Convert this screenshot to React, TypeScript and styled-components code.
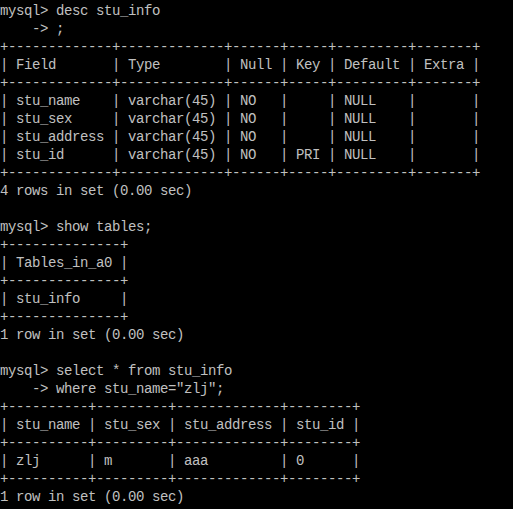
import React from "react";
import styled, { createGlobalStyle } from "styled-components";

const Global = createGlobalStyle`
  html, body { margin: 0; padding: 0; background: #000; }
  #root { background: #000; }
`;

const Terminal = styled.div`
  box-sizing: border-box;
  background: #000;
  width: 513px;
  height: 509px;
  padding-top: 2px;
  overflow: hidden;
  color: #c0c0c0;
  font-family: "Liberation Mono", "DejaVu Sans Mono", monospace;
  font-size: 14px;
  letter-spacing: -0.4px;
  line-height: 18px;
  display: flex;
  flex-direction: column;
`;

const Line = styled.div`
  white-space: pre;
  height: 18px;
  flex: none;
`;

const lines: string[] = [
  "mysql> desc stu_info",
  "    -> ;",
  "+-------------+-------------+------+-----+---------+-------+",
  "| Field       | Type        | Null | Key | Default | Extra |",
  "+-------------+-------------+------+-----+---------+-------+",
  "| stu_name    | varchar(45) | NO   |     | NULL    |       |",
  "| stu_sex     | varchar(45) | NO   |     | NULL    |       |",
  "| stu_address | varchar(45) | NO   |     | NULL    |       |",
  "| stu_id      | varchar(45) | NO   | PRI | NULL    |       |",
  "+-------------+-------------+------+-----+---------+-------+",
  "4 rows in set (0.00 sec)",
  "",
  "mysql> show tables;",
  "+--------------+",
  "| Tables_in_a0 |",
  "+--------------+",
  "| stu_info     |",
  "+--------------+",
  "1 row in set (0.00 sec)",
  "",
  "mysql> select * from stu_info",
  '    -> where stu_name="zlj";',
  "+----------+---------+-------------+--------+",
  "| stu_name | stu_sex | stu_address | stu_id |",
  "+----------+---------+-------------+--------+",
  "| zlj      | m       | aaa         | 0      |",
  "+----------+---------+-------------+--------+",
  "1 row in set (0.00 sec)",
];

export default function App() {
  return (
    <>
      <Global />
      <Terminal>
        {lines.map((l, i) => (
          <Line key={i}>{l}</Line>
        ))}
      </Terminal>
    </>
  );
}
